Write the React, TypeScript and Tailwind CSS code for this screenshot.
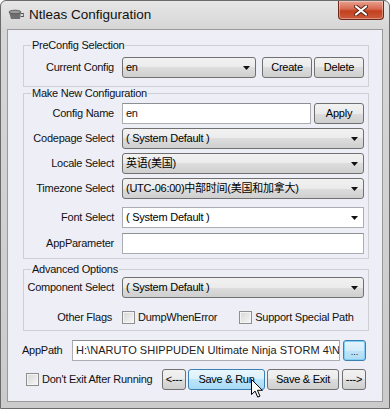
import React from 'react';
import clsx from 'clsx';

const font = "font-['Liberation_Sans','Noto_Sans_CJK_SC',sans-serif]";
const btnFace =
  'rounded-[3px] border border-[#707070] bg-[linear-gradient(to_bottom,#f2f2f2,#ebebeb_50%,#dddddd_50%,#cfcfcf)]';
const btnHover =
  'rounded-[3px] border border-[#3c7fb1] bg-[linear-gradient(to_bottom,#eaf6fd,#d9f0fc_50%,#bee6fd_50%,#a7d9f5)]';

const Arrow = () => (
  <svg width="7" height="4" viewBox="0 0 7 4" className="shrink-0">
    <path d="M0 0h7L3.5 4z" fill="#111" />
  </svg>
);

interface ComboProps {
  value: string;
  className: string;
  editable?: boolean;
}

const Combo: React.FC<ComboProps> = ({ value, className, editable }) => (
  <div
    className={clsx(
      'h-[21px] flex items-center justify-between pl-[3px] pr-[5px] text-[11px] tracking-[-0.25px] text-black',
      editable ? 'bg-white border border-[#abadb3]' : btnFace,
      className
    )}
  >
    <span className="whitespace-nowrap">{value}</span>
    <Arrow />
  </div>
);

const Button: React.FC<{ label: string; className: string; hover?: boolean }> = ({ label, className, hover }) => (
  <div
    className={clsx(
      'h-[21px] flex items-center justify-center text-[11px] tracking-[-0.25px] text-black',
      hover ? btnHover : btnFace,
      className
    )}
  >
    {label}
  </div>
);

const TextBox: React.FC<{ value?: string; className: string }> = ({ value, className }) => (
  <div
    className={clsx(
      'h-[21px] flex items-center bg-white border border-[#abadb3] border-t-[#8d9093] pl-[3px] text-[11px] overflow-hidden whitespace-nowrap',
      className
    )}
  >
    {value}
  </div>
);

const Check = () => (
  <div className="w-[13px] h-[13px] shrink-0 border border-[#8e8f8f] bg-[linear-gradient(135deg,#d6d6d6,#f8f8f8)] shadow-[inset_0_0_0_1px_#f4f4f4]" />
);

const Row: React.FC<{ label: string; className?: string; children: React.ReactNode }> = ({ label, className, children }) => (
  <div className={clsx('flex items-center h-[21px]', className)}>
    <div className="w-[90px] shrink-0 flex justify-end whitespace-nowrap text-[11px] tracking-[-0.25px] text-[#111]">
      {label}
    </div>
    <div className="ml-[8px] flex items-center">{children}</div>
  </div>
);

const Legend: React.FC<{ text: string }> = ({ text }) => (
  <legend className="ml-[7px] px-[1px] text-[11px] leading-[14px] tracking-[-0.25px] text-[#111]">{text}</legend>
);

export default function App() {
  return (
    <div className={clsx('relative w-[390px] h-[409px] overflow-hidden bg-white', font)}>
      <div className="w-[390px] h-[409px] flex flex-col rounded-t-[6px] border border-[#6b6b6b] bg-[linear-gradient(to_bottom,#e6e6e6,#d6d6d6_28px,#cbcbcb)]">
        {/* title bar */}
        <div className="h-[28px] flex items-start shrink-0">
          <div className="flex items-center h-[28px] pl-[7px]">
            <svg width="16" height="12" viewBox="0 0 16 12">
              <path d="M1 3h12l-1 7H3z" fill="#6f6f6f" />
              <ellipse cx="7" cy="3" rx="6" ry="1.8" fill="#9a9a9a" stroke="#4d4d4d" strokeWidth="0.8" />
              <path d="M13 4.5h1.5a1.5 1.5 0 010 3H12.6" fill="none" stroke="#555" strokeWidth="1.2" />
            </svg>
            <span className="ml-[5px] text-[13.5px] text-[#111] leading-none">Ntleas Configuration</span>
          </div>
          <div className="ml-auto mr-[5px] w-[46px] h-[19px] rounded-b-[4px] border border-t-0 border-[#6d2a1c] bg-[linear-gradient(to_bottom,#e8a291,#d6684f_45%,#c2401f_55%,#cc5a3c)] flex items-center justify-center shadow-[inset_0_0_0_1px_rgba(255,255,255,0.35)]">
            <svg width="14" height="11" viewBox="0 0 14 11">
              <path d="M2 1.5l10 8M12 1.5l-10 8" stroke="#5a2318" strokeWidth="4" strokeLinecap="round" />
              <path d="M2 1.5l10 8M12 1.5l-10 8" stroke="#fff" strokeWidth="2.2" strokeLinecap="round" />
            </svg>
          </div>
        </div>

        {/* client area */}
        <div className="mx-[6px] h-[373px] border border-[#9a9a9a] bg-[#eeeef6] text-[#111]">
          <fieldset className="ml-[15px] mt-[8px] w-[346px] border border-[#cfcfd8] pt-[5px] pb-[8px]">
            <Legend text="PreConfig Selection" />
            <Row label="Current Config">
              <Combo value="en" className="w-[134px]" />
              <Button label="Create" className="w-[50px] ml-[6px]" />
              <Button label="Delete" className="w-[50px] ml-[2px]" />
            </Row>
          </fieldset>

          <fieldset className="ml-[15px] -mt-[1px] w-[346px] border border-[#cfcfd8] pt-[3px] pb-[4px]">
            <Legend text="Make New Configuration" />
            <Row label="Config Name">
              <TextBox value="en" className="w-[189px] tracking-[-0.25px]" />
              <Button label="Apply" className="w-[50px] ml-[3px]" />
            </Row>
            <Row label="Codepage Select" className="mt-[4px]">
              <Combo value="( System Default )" className="w-[242px]" />
            </Row>
            <Row label="Locale Select" className="mt-[4px]">
              <Combo value="英语(美国)" className="w-[242px]" />
            </Row>
            <Row label="Timezone Select" className="mt-[4px]">
              <Combo value="(UTC-06:00)中部时间(美国和加拿大)" className="w-[242px]" />
            </Row>
            <Row label="Font Select" className="mt-[8px]">
              <Combo value="( System Default )" className="w-[242px]" editable />
            </Row>
            <Row label="AppParameter" className="mt-[5px]">
              <TextBox className="w-[242px]" />
            </Row>
          </fieldset>

          <fieldset className="ml-[15px] mt-[3px] w-[346px] border border-[#cfcfd8] pt-[1px] pb-[3px]">
            <Legend text="Advanced Options" />
            <Row label="Component Select">
              <Combo value="( System Default )" className="w-[242px]" />
            </Row>
            <div className="flex items-center h-[20px] mt-[9px]">
              <div className="w-[88px] shrink-0 flex justify-end text-[11px] tracking-[-0.25px]">Other Flags</div>
              <div className="ml-[10px] flex items-center">
                <Check />
                <span className="ml-[3px] text-[11px] tracking-[-0.25px]">DumpWhenError</span>
              </div>
              <div className="ml-[22px] flex items-center">
                <Check />
                <span className="ml-[3px] text-[11px] tracking-[-0.25px]">Support Special Path</span>
              </div>
            </div>
          </fieldset>

          <div className="flex items-center h-[21px] mt-[9px] pl-[14px]">
            <div className="w-[50px] shrink-0 text-[11px] tracking-[-0.25px]">AppPath</div>
            <TextBox
              value={'H:\\NARUTO SHIPPUDEN Ultimate Ninja STORM 4\\N'}
              className="w-[268px] h-[19px] text-[#222] tracking-[0.05px]"
            />
            <div className="ml-[3px] w-[23px] h-[21px] shrink-0 rounded-[3px] border border-[#3c7fb1] bg-[linear-gradient(to_bottom,#e8f5fc,#d2ecfa_50%,#bfe4f8_50%,#aedcf4)] shadow-[inset_0_0_0_1px_#7fd0f4] flex items-end justify-center pb-[3px] text-[9px] leading-none">
              ...
            </div>
          </div>

          <div className="flex items-center h-[21px] mt-[8px] pl-[18px]">
            <div className="w-[136px] shrink-0 flex items-center">
              <Check />
              <span className="ml-[3px] text-[11px] tracking-[-0.25px] whitespace-nowrap">Don't Exit After Running</span>
            </div>
            <Button label="<---" className="w-[24px] text-[9px]" />
            <Button label="Save & Run" className="w-[77px] ml-[2px]" hover />
            <Button label="Save & Exit" className="w-[72px] ml-[2px]" />
            <Button label="--->" className="w-[24px] ml-[3px] text-[9px]" />
          </div>
        </div>
      </div>

      {/* mouse cursor */}
      <svg className="absolute left-[251px] top-[379px]" width="13" height="20" viewBox="0 0 13 20">
        <path d="M0.5 0.5v15l3.6-3.4 2.6 6 2.3-1-2.6-5.8h5z" fill="#fff" stroke="#000" strokeWidth="1" strokeLinejoin="round" />
      </svg>
    </div>
  );
}
